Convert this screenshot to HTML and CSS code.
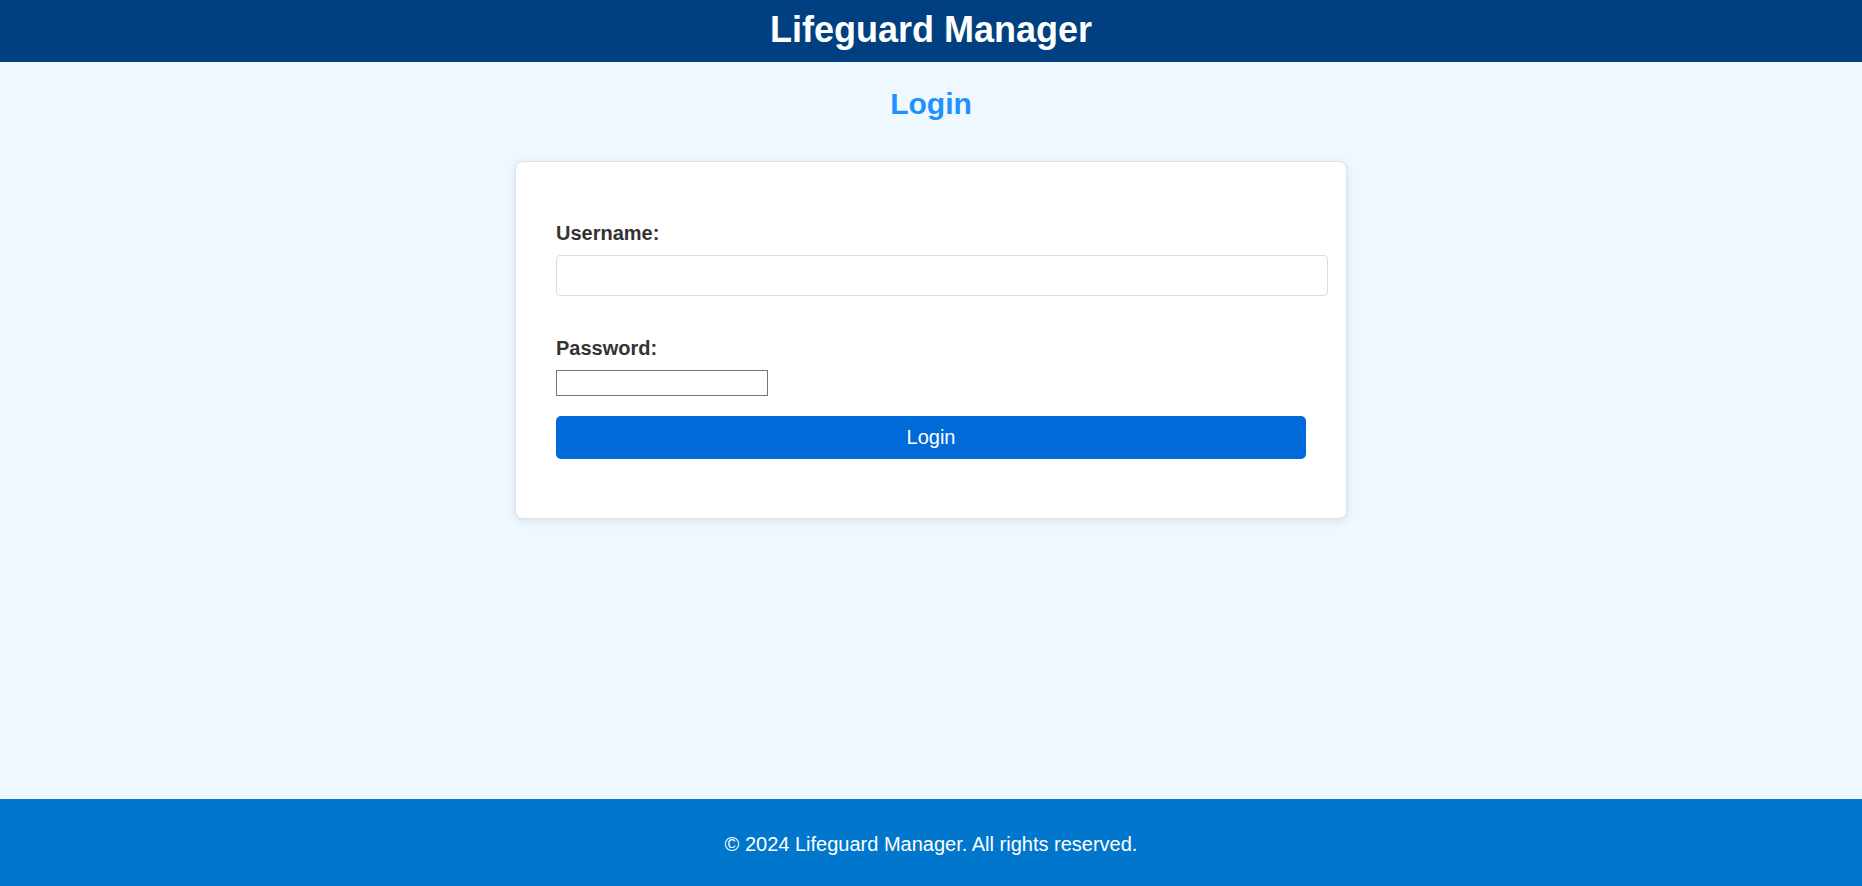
FILE: index.html
```html
<!DOCTYPE html>
<html lang="en">
<head>
<meta charset="utf-8">
<title>Lifeguard Manager - Login</title>
<link rel="stylesheet" href="styles.css">
</head>
<body>
<header class="site-header">
  <h1 class="site-title">Lifeguard Manager</h1>
</header>
<main class="main">
  <h2 class="page-title">Login</h2>
  <div class="card">
    <form class="login-form">
      <div class="field">
        <label class="field-label" for="username">Username:</label>
        <input class="text-input" type="text" id="username" name="username">
      </div>
      <div class="field field-password">
        <label class="field-label" for="password">Password:</label>
        <input class="plain-input" type="password" id="password" name="password">
      </div>
      <button class="login-button" type="submit">Login</button>
    </form>
  </div>
</main>
<footer class="site-footer">
  <p class="footer-text">© 2024 Lifeguard Manager. All rights reserved.</p>
</footer>
</body>
</html>
```
FILE: styles.css
```css
* { margin: 0; }
html, body { height: 100%; }
body {
  font-family: "Liberation Sans", Arial, sans-serif;
  background: #eff7ff;
  color: #333;
  display: flex;
  flex-direction: column;
  min-height: 100vh;
}
.site-header {
  background: #004080;
  color: #fff;
  text-align: center;
  padding: 9px 0 11px;
}
.site-title {
  font-size: 36px;
  line-height: 42px;
  font-weight: bold;
}
.main {
  flex: 1;
  display: flex;
  flex-direction: column;
  align-items: center;
}
.page-title {
  color: #1e90ff;
  font-size: 30px;
  line-height: 34px;
  font-weight: bold;
  margin: 25px 0 40px;
}
.card {
  width: 750px;
  padding: 40px;
  background: #fff;
  border: 1px solid #dde3ea;
  border-radius: 8px;
  box-shadow: 0 2px 8px rgba(0, 0, 0, 0.1);
}
.login-form {
  padding: 20px 0 19px;
  display: flex;
  flex-direction: column;
}
.field {
  display: flex;
  flex-direction: column;
  align-items: flex-start;
}
.field-password { margin-top: 41px; }
.field-label {
  font-size: 20px;
  line-height: 23px;
  font-weight: bold;
  color: #333;
  margin-bottom: 10px;
}
.text-input {
  width: 100%;
  padding: 10px;
  font-size: 16px;
  line-height: 19px;
  height: 19px;
  border: 1px solid #dcdcdc;
  border-radius: 4px;
  font-family: inherit;
}
.plain-input {
  box-sizing: border-box;
  width: 212px;
  height: 26px;
  border: 1px solid #767676;
  padding: 1px 2px;
  font-size: 16px;
  background: #fff;
}
.login-button {
  margin-top: 20px;
  width: 100%;
  padding: 10px;
  font-size: 20px;
  line-height: 23px;
  font-family: inherit;
  color: #fff;
  background: #006ad9;
  border: none;
  border-radius: 5px;
  cursor: pointer;
}
.site-footer {
  background: #0077cc;
  color: #fff;
  text-align: center;
  padding: 34px 0 30px;
}
.footer-text {
  font-size: 20px;
  line-height: 23px;
}
```
